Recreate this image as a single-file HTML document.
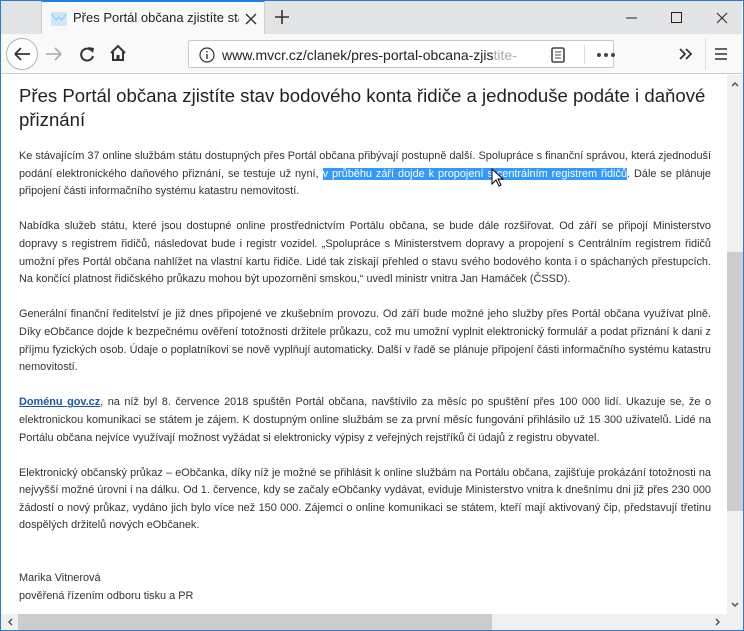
<!DOCTYPE html>
<html><head><meta charset="utf-8"><style>
*{margin:0;padding:0;box-sizing:border-box}
body{width:744px;height:631px;overflow:hidden;background:#fff;font-family:"Liberation Sans",Arial,sans-serif;position:relative}
.win{position:absolute;inset:0;border:1px solid #2b7bd3}
.tabbar{position:absolute;left:0;top:0;width:742px;height:34px;background:#e3e4e6}
.tab{position:absolute;left:41px;top:0;width:224px;height:34px;background:#f9f9fa;border-top:2px solid #0a84ff;border-right:1px solid #ccc;border-left:1px solid #ccc}
.tab .t{position:absolute;left:31px;top:8px;font-size:13px;color:#222;white-space:nowrap;width:166px;overflow:hidden}
.tool{position:absolute;left:0;top:34px;width:742px;height:40px;background:#f9f9fa;border-bottom:1px solid #ccc}
.url{position:absolute;left:188px;top:6px;width:426px;height:28px;background:#fff;border:1px solid #c8c8c8;border-radius:2px}
.url .u{position:absolute;left:33px;top:6px;font-size:14px;color:#222;white-space:nowrap}
.content{position:absolute;left:1px;top:75px;width:726px;height:539px;background:#fff;overflow:hidden}
h1{position:absolute;left:18px;top:9px;font-size:18.6px;font-weight:normal;color:#222;line-height:24px;width:700px;white-space:nowrap}
.txt{position:absolute;left:18px;top:73px;width:692px;font-size:10.9px;line-height:17.6px;color:#333}
.l{text-align:justify;text-align-last:justify;white-space:nowrap}
.e{text-align:left;white-space:nowrap}
.gap{height:17.6px}
.sel{background:#3399ff;color:#fff}
a{color:#1a56a8;font-weight:bold}
.vs{position:absolute;left:727px;top:75px;width:16px;height:539px;background:#f0f0f0}
.hs{position:absolute;left:1px;top:614px;width:726px;height:16px;background:#f0f0f0}
.corner{position:absolute;left:727px;top:614px;width:16px;height:16px;background:#f0f0f0}
</style></head><body>
<div class="tabbar">
 <div class="tab">
  <svg style="position:absolute;left:9px;top:10px" width="16" height="14"><rect x="0" y="0" width="16" height="14" fill="#cfe8f7"/><path d="M1 2 L5 8 L8 5 L11 8 L15 2" stroke="#8cc6ea" fill="none"/></svg>
  <div class="t">Přes Portál občana zjistíte stav bodového</div>
  <svg style="position:absolute;left:203px;top:11px" width="12" height="12"><path d="M1 1L11 11M11 1L1 11" stroke="#333" stroke-width="1.4"/></svg>
 </div>
 <svg style="position:absolute;left:274px;top:9px" width="16" height="16"><path d="M8 1V15M1 8H15" stroke="#333" stroke-width="1.6"/></svg>
 <svg style="position:absolute;left:620px;top:11px" width="120" height="14"><path d="M6 7H17" stroke="#222"/><rect x="51.5" y="1.5" width="10" height="10" fill="none" stroke="#222"/><path d="M97 2L107 12M107 2L97 12" stroke="#222"/></svg>
</div>
<div class="tool">
 <svg style="position:absolute;left:5px;top:3px" width="34" height="34"><circle cx="17" cy="17" r="15.5" fill="#fff" stroke="#b5b5b5"/><path d="M10 17H25M10 17L16 11M10 17L16 23" stroke="#333" stroke-width="1.8" fill="none"/></svg>
 <svg style="position:absolute;left:45px;top:12px" width="18" height="16"><path d="M1 8H16M16 8L10 2M16 8L10 14" stroke="#aaa" stroke-width="1.6" fill="none"/></svg>
 <svg style="position:absolute;left:78px;top:11px" width="18" height="18"><path d="M14 6A6 6 0 1 0 15 11" stroke="#333" stroke-width="2" fill="none"/><path d="M10 2L16 3L15 8Z" fill="#333"/></svg>
 <svg style="position:absolute;left:109px;top:10px" width="18" height="18"><path d="M2 9L9 2L16 9M4 8V16H14V8" stroke="#333" stroke-width="2" fill="none"/><rect x="7.5" y="11" width="3" height="5" fill="#333"/></svg>
 <div class="url">
  <svg style="position:absolute;left:10px;top:6px" width="16" height="16"><circle cx="8" cy="8" r="7" fill="none" stroke="#333" stroke-width="1.2"/><rect x="7.3" y="7" width="1.4" height="5" fill="#333"/><rect x="7.3" y="4" width="1.4" height="1.5" fill="#333"/></svg>
  <div class="u">www.mvcr.cz/clanek/pres-portal-obcana-zjis<span style="color:#aaa">tite-</span></div>
  <svg style="position:absolute;left:362px;top:6px" width="14" height="16"><rect x="1" y="1" width="12" height="14" rx="1.5" fill="none" stroke="#444" stroke-width="1.6"/><path d="M4 5H10M4 8H10M4 11H10" stroke="#444"/></svg>
  <div style="position:absolute;left:395px;top:4px;width:1px;height:19px;background:#ddd"></div>
  <svg style="position:absolute;left:407px;top:11px" width="20" height="6"><circle cx="3" cy="3" r="2" fill="#444"/><circle cx="10" cy="3" r="2" fill="#444"/><circle cx="17" cy="3" r="2" fill="#444"/></svg>
 </div>
 <svg style="position:absolute;left:679px;top:14px" width="14" height="12"><path d="M1 1L6 6L1 11M7 1L12 6L7 11" stroke="#333" stroke-width="1.8" fill="none"/></svg>
 <div style="position:absolute;left:705px;top:4px;width:1px;height:32px;background:#ddd"></div>
 <svg style="position:absolute;left:714px;top:13px" width="14" height="14"><path d="M1 2H13M1 7H13M1 12H13" stroke="#333" stroke-width="1.6"/></svg>
</div>
<div class="content">
<h1>Přes Portál občana zjistíte stav bodového konta řidiče a jednoduše podáte i daňové<br>přiznání</h1>
<div class="txt">
<div class="l">Ke stávajícím 37 online službám státu dostupných přes Portál občana přibývají postupně další. Spolupráce s finanční správou, která zjednoduší</div>
<div class="l">podání elektronického daňového přiznání, se testuje už nyní, <span class="sel">v průběhu září dojde k propojení s centrálním registrem řidičů</span>. Dále se plánuje</div>
<div class="e">připojení části informačního systému katastru nemovitostí.</div>
<div class="gap"></div>
<div class="l">Nabídka služeb státu, které jsou dostupné online prostřednictvím Portálu občana, se bude dále rozšiřovat. Od září se připojí Ministerstvo</div>
<div class="l">dopravy s registrem řidičů, následovat bude i registr vozidel. „Spolupráce s Ministerstvem dopravy a propojení s Centrálním registrem řidičů</div>
<div class="l">umožní přes Portál občana nahlížet na vlastní kartu řidiče. Lidé tak získají přehled o stavu svého bodového konta i o spáchaných přestupcích.</div>
<div class="e">Na končící platnost řidičského průkazu mohou být upozorněni smskou,“ uvedl ministr vnitra Jan Hamáček (ČSSD).</div>
<div class="gap"></div>
<div class="l">Generální finanční ředitelství je již dnes připojené ve zkušebním provozu. Od září bude možné jeho služby přes Portál občana využívat plně.</div>
<div class="l">Díky eObčance dojde k bezpečnému ověření totožnosti držitele průkazu, což mu umožní vyplnit elektronický formulář a podat přiznání k dani z</div>
<div class="l">příjmu fyzických osob. Údaje o poplatníkovi se nově vyplňují automaticky. Další v řadě se plánuje připojení části informačního systému katastru</div>
<div class="e">nemovitostí.</div>
<div class="gap"></div>
<div class="l"><a><u>Doménu gov.cz</u></a>, na níž byl 8. července 2018 spuštěn Portál občana, navštívilo za měsíc po spuštění přes 100 000 lidí. Ukazuje se, že o</div>
<div class="l">elektronickou komunikaci se státem je zájem. K dostupným online službám se za první měsíc fungování přihlásilo už 15 300 uživatelů. Lidé na</div>
<div class="e">Portálu občana nejvíce využívají možnost vyžádat si elektronicky výpisy z veřejných rejstříků či údajů z registru obyvatel.</div>
<div class="gap"></div>
<div class="l">Elektronický občanský průkaz – eObčanka, díky níž je možné se přihlásit k online službám na Portálu občana, zajišťuje prokázání totožnosti na</div>
<div class="l">nejvyšší možné úrovni i na dálku. Od 1. července, kdy se začaly eObčanky vydávat, eviduje Ministerstvo vnitra k dnešnímu dni již přes 230 000</div>
<div class="l">žádostí o nový průkaz, vydáno jich bylo více než 150 000. Zájemci o online komunikaci se státem, kteří mají aktivovaný čip, představují třetinu</div>
<div class="e">dospělých držitelů nových eObčanek.</div>
<div class="gap"></div><div class="gap"></div>
<div class="e">Marika Vitnerová</div>
<div class="e">pověřená řízením odboru tisku a PR</div>
</div>
<svg style="position:absolute;left:490px;top:93px" width="14" height="20"><path d="M1 1V16L5 12L8 18L10 17L7 11H12Z" fill="#fff" stroke="#000"/></svg>
</div>
<div class="vs"><div style="position:absolute;left:0;top:177px;width:16px;height:259px;background:#cdcdcd"></div>
<svg style="position:absolute;left:4px;top:6px" width="8" height="6"><path d="M1 5L4 2L7 5" stroke="#555" stroke-width="1.5" fill="none"/></svg>
<svg style="position:absolute;left:4px;top:527px" width="8" height="6"><path d="M1 1L4 4L7 1" stroke="#555" stroke-width="1.5" fill="none"/></svg></div>
<div class="hs"><div style="position:absolute;left:17px;top:0;width:474px;height:16px;background:#cdcdcd"></div>
<svg style="position:absolute;left:6px;top:4px" width="6" height="8"><path d="M5 1L2 4L5 7" stroke="#555" stroke-width="1.5" fill="none"/></svg>
<svg style="position:absolute;left:714px;top:4px" width="6" height="8"><path d="M1 1L4 4L1 7" stroke="#555" stroke-width="1.5" fill="none"/></svg></div>
<div class="corner"></div>
<div class="win"></div>
</body></html>
